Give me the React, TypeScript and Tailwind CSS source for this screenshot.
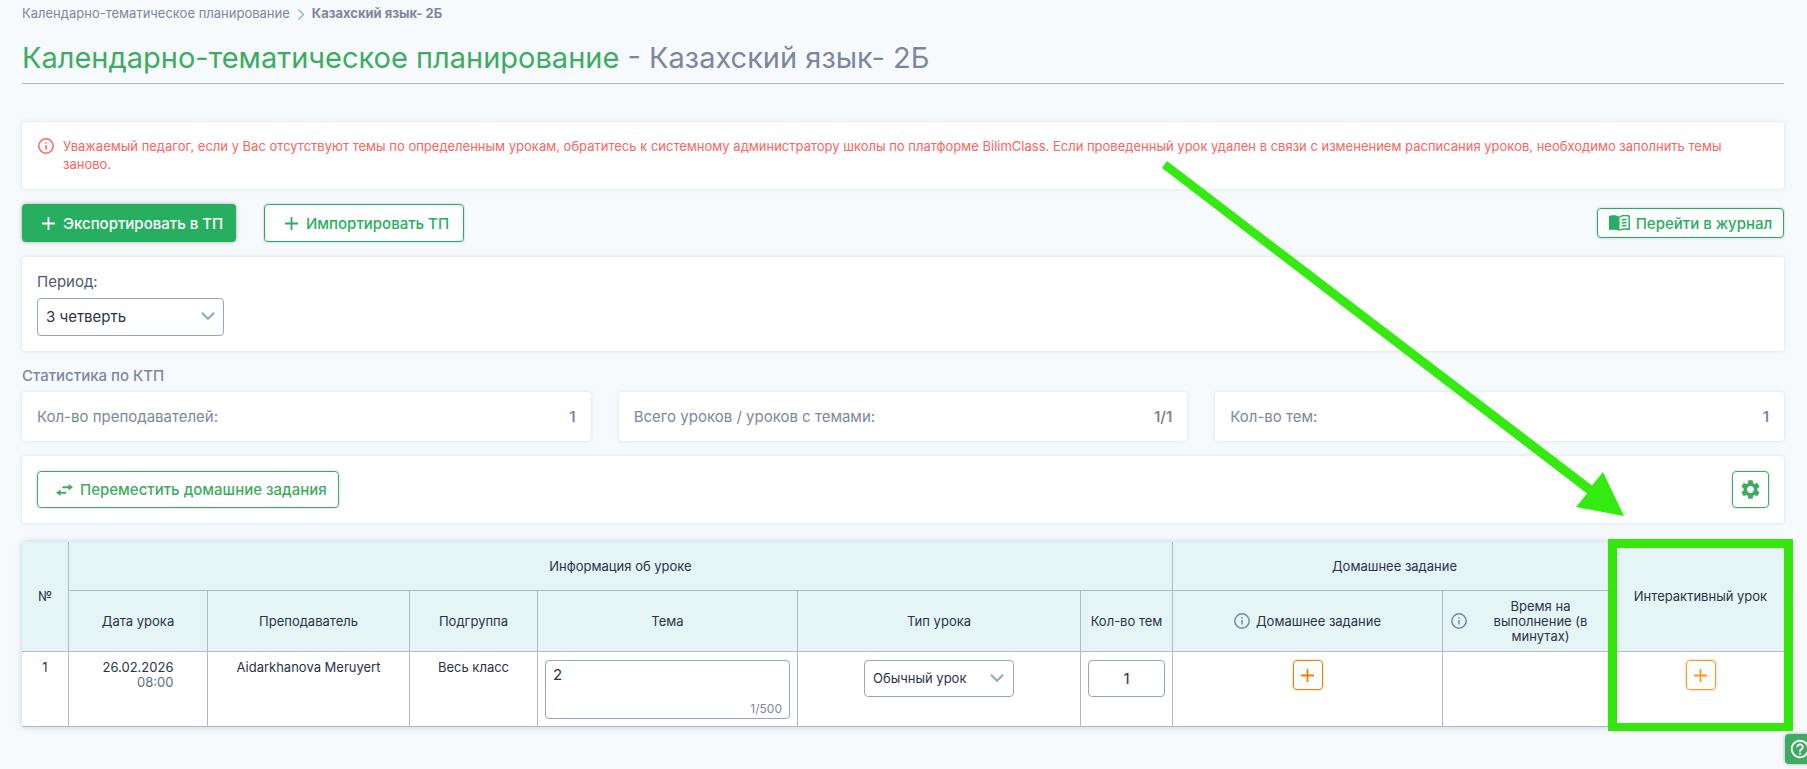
import React, { useState } from 'react';
import { MdHelpOutline, MdSettings } from 'react-icons/md';

interface StatCardProps {
  label: string;
  value: string;
}

const InfoIcon: React.FC<{ className?: string }> = ({ className = '' }) => (
  <svg viewBox="0 0 16 16" fill="none" stroke="currentColor" strokeWidth="1.5" className={`w-4 h-4 shrink-0 ${className}`}>
    <circle cx="8" cy="8" r="7.2" />
    <path d="M8 7v4.500M8 4.300v1.500" />
  </svg>
);

const PlusIcon: React.FC = () => (
  <svg viewBox="0 0 13 13" stroke="currentColor" strokeWidth="1.8" className="w-[13px] h-[13px] shrink-0">
    <path d="M6.5 0v13M0 6.5h13" />
  </svg>
);

const Chevron: React.FC<{ className?: string }> = ({ className = '' }) => (
  <svg viewBox="0 0 14 8" fill="none" stroke="currentColor" strokeWidth="2" className={`w-3.5 h-2 absolute pointer-events-none text-[#8fa9bf] ${className}`}>
    <path d="M1 0.8l6 6 6-6" />
  </svg>
);

const BookIcon: React.FC = () => (
  <svg viewBox="0 0 21 16" className="w-[21px] h-4 shrink-0" fill="currentColor">
    <path d="M10.5 2C8.6.4 5.2 0 1.2.6.5.7 0 1.1 0 1.8v12.4c0 .7.5 1 1.2.9 3.6-.5 7-.3 9.300.9z" />
    <path d="M10.5 2.200C12.600.700 15.800.300 19.300.800c.5.1.9.4.9.9v12.500c-3.500-.5-7.200-.3-9.700.9" fill="none" stroke="currentColor" strokeWidth="1.5" />
    <path d="M12.800 5.200c1.500-.6 3-.8 4.800-.7M12.800 8.200c1.500-.6 3-.8 4.800-.7M12.800 11.200c1.500-.6 3-.8 4.800-.7" fill="none" stroke="currentColor" strokeWidth="1.3" />
  </svg>
);

const SwapIcon: React.FC = () => (
  <svg viewBox="0 0 17 12" className="w-[17px] h-3 shrink-0" fill="currentColor">
    <path d="M6.500 2.300h6V0L17 3.300l-4.500 3.300V4.300h-6zM10 7.700H4.500V5.400L0 8.700 4.500 12V9.700H10z" />
  </svg>
);

const StatCard: React.FC<StatCardProps> = ({ label, value }) => (
  <div className="flex-1 flex items-center justify-between bg-white rounded shadow-[0_0_4px_rgba(80,130,150,0.2)] px-[15px] pt-0.5 h-[49px] text-[15px] text-[#7e869e]">
    <span>{label}</span>
    <span className="font-semibold">{value}</span>
  </div>
);

const th = 'bg-[#e5f5f6] border-[#aeb8c6] border-b font-normal px-2 leading-[15px]';
const td = 'bg-white border-[#aeb8c6] border-b align-top px-[7px] pt-2 pb-[7px] leading-[15px]';

const App: React.FC = () => {
  const [period, setPeriod] = useState('3');
  const [topic, setTopic] = useState('2');
  const [lessonType, setLessonType] = useState('regular');
  const [count, setCount] = useState('1');

  return (
    <div className="relative min-h-screen overflow-hidden bg-[#f6fafd] pl-[22px] pr-[23px] pb-10 text-[13px] text-[#2b3248] font-['Inter','Noto_Sans',sans-serif]">
      <nav className="flex items-center gap-2 pt-1 h-6 text-[#7e869e]" aria-label="Навигация">
        <a href="#plans">Календарно-тематическое планирование</a>
        <svg viewBox="0 0 6 11" fill="none" stroke="currentColor" strokeWidth="1.2" className="w-1.5 h-[11px] text-[#8fa9bf]">
          <path d="M0.5 0.5l5 5-5 5" />
        </svg>
        <span className="font-bold">Казахский язык- 2Б</span>
      </nav>

      <h1 className="mt-[14px] h-[46px] border-b border-[#aeb8c6] text-[29px] leading-10 text-[#7e869e]">
        <span className="text-[#3dac60]">Календарно-тематическое планирование</span> - Казахский язык- 2Б
      </h1>

      <div className="mt-[38px] flex gap-[9px] bg-white rounded shadow-[0_0_4px_rgba(80,130,150,0.2)] pl-4 pr-12 pt-[15px] pb-4 text-[#fb6460] leading-[18px]">
        <InfoIcon className="mt-px" />
        <p>
          Уважаемый педагог, если у Вас отсутствуют темы по определенным урокам, обратитесь к системному администратору школы по платформе BilimClass. Если проведенный урок удален в связи с изменением расписания уроков, необходимо заполнить темы заново.
        </p>
      </div>

      <div className="mt-[15px] flex items-center text-[15px] font-medium">
        <button className="flex items-center gap-2 h-[38px] w-[214px] pl-5 rounded bg-[#27ae60] text-white shadow-[0_0_4px_rgba(0,0,0,0.3)]">
          <PlusIcon />
          <span className="pt-0.5">Экспортировать в ТП</span>
        </button>
        <button className="ml-7 flex items-center gap-2 h-[38px] w-[200px] pl-5 rounded border border-[#27ae60] bg-white text-[#27ae60] shadow-[0_0_3px_rgba(0,0,0,0.2)]">
          <PlusIcon />
          <span className="pt-0.5">Импортировать ТП</span>
        </button>
        <button className="ml-auto flex items-center justify-center gap-1.5 h-[30px] w-[187px] rounded border border-[#27ae60] bg-white text-[#27ae60] shadow-[0_0_3px_rgba(0,0,0,0.2)]">
          <BookIcon />
          <span className="pt-0.5">Перейти в журнал</span>
        </button>
      </div>

      <div className="mt-[15px] bg-white rounded shadow-[0_0_4px_rgba(80,130,150,0.2)] p-[15px] text-[15px]">
        <label htmlFor="period" className="block leading-5 text-[#515971]">Период:</label>
        <div className="relative mt-[6px] w-[187px]">
          <select
            id="period"
            value={period}
            onChange={(e) => setPeriod(e.target.value)}
            className="appearance-none w-full h-[38px] rounded border border-[#8fa9bf] bg-white pl-2 pr-8 outline-none"
          >
            <option value="1">1 четверть</option>
            <option value="2">2 четверть</option>
            <option value="3">3 четверть</option>
            <option value="4">4 четверть</option>
          </select>
          <Chevron className="right-[9px] top-[14px]" />
        </div>
      </div>

      <h2 className="mt-[15px] text-[15px] leading-5 font-medium text-[#7e869e]">Статистика по КТП</h2>
      <div className="mt-[6px] flex gap-7">
        <StatCard label="Кол-во преподавателей:" value="1" />
        <StatCard label="Всего уроков / уроков с темами:" value="1/1" />
        <StatCard label="Кол-во тем:" value="1" />
      </div>

      <div className="mt-[15px] flex items-center justify-between bg-white rounded shadow-[0_0_4px_rgba(80,130,150,0.2)] p-[15px]">
        <button className="flex items-center gap-[7px] h-[37px] w-[302px] pl-[18px] rounded border border-[#3dac60] text-[15px] font-medium text-[#3dac60] shadow-[0_0_3px_rgba(0,0,0,0.2)]">
          <SwapIcon />
          <span className="pt-0.5 whitespace-nowrap">Переместить домашние задания</span>
        </button>
        <button aria-label="Настройки" className="flex items-center justify-center w-[37px] h-[37px] rounded border border-[#3dac60] text-[#3dac60] shadow-[0_0_3px_rgba(0,0,0,0.2)]">
          <MdSettings className="w-[23px] h-[23px]" />
        </button>
      </div>

      <div className="relative mt-[19px]">
        <table className="w-full table-fixed border-separate border-spacing-0 text-center rounded-t shadow-[0_0_6px_rgba(80,110,140,0.3)]">
          <colgroup>
            <col className="w-[47px]" />
            <col className="w-[139px]" />
            <col className="w-[202px]" />
            <col className="w-[128px]" />
            <col />
            <col className="w-[283px]" />
            <col className="w-[92px]" />
            <col className="w-[270px]" />
            <col className="w-[174px]" />
            <col className="w-[167px]" />
          </colgroup>
          <thead>
            <tr className="h-[49px]">
              <th rowSpan={2} className={`${th} border-r rounded-tl`}>№</th>
              <th colSpan={6} className={`${th} border-r`}>Информация об уроке</th>
              <th colSpan={2} className={`${th} border-r`}>Домашнее задание</th>
              <th rowSpan={2} className={`${th} rounded-tr`}>Интерактивный урок</th>
            </tr>
            <tr className="h-[61px]">
              <th className={`${th} border-r`}>Дата урока</th>
              <th className={`${th} border-r`}>Преподаватель</th>
              <th className={`${th} border-r`}>Подгруппа</th>
              <th className={`${th} border-r`}>Тема</th>
              <th className={`${th} border-r`}>Тип урока</th>
              <th className={`${th} border-r whitespace-nowrap`}>Кол-во тем</th>
              <th className={`${th} border-r`}>
                <div className="flex items-center justify-center gap-[6px]">
                  <InfoIcon className="text-[#7e869e]" />
                  Домашнее задание
                </div>
              </th>
              <th className={`${th} border-r`}>
                <div className="flex items-center gap-[6px]">
                  <InfoIcon className="text-[#7e869e]" />
                  <span className="flex-1 px-4">Время на выполнение (в минутах)</span>
                </div>
              </th>
            </tr>
          </thead>
          <tbody>
            <tr>
              <td className={`${td} border-r`}>1</td>
              <td className={`${td} border-r`}>
                <div className="inline-block text-right">
                  26.02.2026
                  <div className="text-[#616a85]">08:00</div>
                </div>
              </td>
              <td className={`${td} border-r`}>Aidarkhanova Meruyert</td>
              <td className={`${td} border-r`}>Весь класс</td>
              <td className={`${td} border-r`}>
                <div className="relative">
                  <textarea
                    aria-label="Тема"
                    value={topic}
                    maxLength={500}
                    onChange={(e) => setTopic(e.target.value)}
                    className="block w-full h-[59px] resize-none rounded border border-[#8fa9bf] px-[7px] py-[5px] text-[15px] leading-[18px] outline-none"
                  />
                  <span className="absolute right-2 bottom-[3px] text-xs leading-[15px] text-[#7e869e]">{topic.length}/500</span>
                </div>
              </td>
              <td className={`${td} border-r`}>
                <div className="relative w-[150px] mx-auto">
                  <select
                    aria-label="Тип урока"
                    value={lessonType}
                    onChange={(e) => setLessonType(e.target.value)}
                    className="appearance-none w-full h-[37px] rounded border border-[#8fa9bf] bg-white pl-2 pr-8 outline-none"
                  >
                    <option value="regular">Обычный урок</option>
                    <option value="sor">СОР</option>
                    <option value="soch">СОЧ</option>
                  </select>
                  <Chevron className="right-[10px] top-[14px]" />
                </div>
              </td>
              <td className={`${td} border-r`}>
                <input
                  aria-label="Кол-во тем"
                  value={count}
                  onChange={(e) => setCount(e.target.value)}
                  className="block w-full h-[37px] rounded border border-[#8fa9bf] text-center text-[15px] outline-none"
                />
              </td>
              <td className={`${td} border-r`}>
                <button aria-label="Добавить домашнее задание" className="inline-flex items-center justify-center w-[30px] h-[30px] rounded border border-[#f57c00] text-[#f57c00] shadow-[0_0_3px_rgba(0,0,0,0.2)]">
                  <PlusIcon />
                </button>
              </td>
              <td className={`${td} border-r`} />
              <td className={td}>
                <button aria-label="Добавить интерактивный урок" className="inline-flex items-center justify-center w-[30px] h-[30px] rounded border border-[#fb9a1c] text-[#fb9a1c] shadow-[0_0_3px_rgba(0,0,0,0.2)]">
                  <PlusIcon />
                </button>
              </td>
            </tr>
          </tbody>
        </table>

        {/* highlight over the last column */}
        <div className="absolute -top-[3px] -bottom-1 -right-[9px] w-[185px] border-[9px] border-b-8 border-[#2be600]/95 pointer-events-none" />
        {/* arrow that leads to it */}
        <svg viewBox="0 0 462 355" className="absolute -top-[381px] right-[160px] w-[462px] h-[355px] pointer-events-none" fill="#35ea10">
          <path d="M0 7L5 0l425 324.5 11-13.5 21 44-48-9 11-13.5z" />
        </svg>
      </div>

      <button aria-label="Помощь" className="fixed -right-2 bottom-[5px] flex items-center justify-center w-[30px] h-[30px] rounded bg-[#3dac60] text-white shadow-[0_0_4px_rgba(0,0,0,0.3)]">
        <MdHelpOutline className="w-[22px] h-[22px]" />
      </button>
    </div>
  );
};

export default App;
